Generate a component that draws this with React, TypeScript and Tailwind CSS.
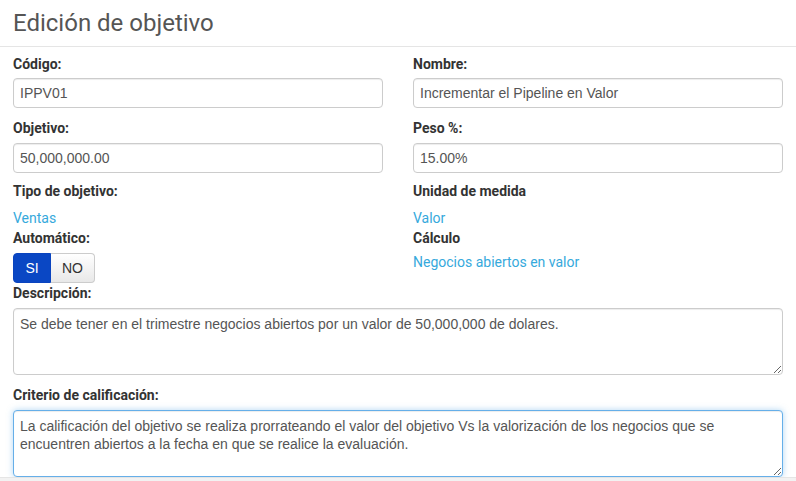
import React from "react";

const labelCls =
  "block font-['Roboto',sans-serif] font-bold text-[14px] leading-[20px] text-[#333333]";
const inputCls =
  "block w-full h-[30px] rounded-[4px] border border-[#cccccc] bg-white px-[6px] font-['Liberation_Sans',Arial,sans-serif] text-[14px] text-[#555555] outline-none shadow-[inset_0_1px_1px_rgba(0,0,0,0.075)]";
const linkCls =
  "block font-['Roboto',sans-serif] text-[14px] leading-[20px] text-[#36a9dc]";

export default function App() {
  return (
    <div className="w-[796px] h-[481px] overflow-hidden bg-white flex flex-col">
      <div className="h-[47px] shrink-0 border-b border-[#e5e5e5] pl-[13px] pt-[9px]">
        <h1 className="font-['Roboto',sans-serif] text-[24px] leading-[28px] text-[#555555] font-normal">
          Edición de objetivo
        </h1>
      </div>

      <div className="flex-1 px-[13px]">
        <div className="grid grid-cols-2 gap-x-[30px]">
          <div className="pt-[7px]">
            <label className={labelCls}>Código:</label>
            <input className={`${inputCls} mt-[4px]`} value="IPPV01" readOnly />
          </div>
          <div className="pt-[7px]">
            <label className={labelCls}>Nombre:</label>
            <input
              className={`${inputCls} mt-[4px]`}
              value="Incrementar el Pipeline en Valor"
              readOnly
            />
          </div>

          <div className="pt-[10px]">
            <label className={labelCls}>Objetivo:</label>
            <input className={`${inputCls} mt-[5px]`} value="50,000,000.00" readOnly />
          </div>
          <div className="pt-[10px]">
            <label className={labelCls}>Peso %:</label>
            <input className={`${inputCls} mt-[5px]`} value="15.00%" readOnly />
          </div>

          <div className="pt-[8px]">
            <span className={labelCls}>Tipo de objetivo:</span>
            <a className={`${linkCls} mt-[7px]`}>Ventas</a>
            <span className={labelCls}>Automático:</span>
            <div className="mt-[5px] flex h-[30px] w-[82px] font-['Liberation_Sans',Arial,sans-serif] text-[14px]">
              <div className="flex w-[38px] items-center justify-center rounded-l-[4px] border border-[#0a44bf] bg-[#0a47c4] text-white">
                SI
              </div>
              <div className="flex w-[44px] items-center justify-center rounded-r-[4px] border border-l-0 border-[#cccccc] bg-gradient-to-b from-white to-[#e8e8e8] text-[#333333]">
                NO
              </div>
            </div>
          </div>
          <div className="pt-[8px]">
            <span className={labelCls}>Unidad de medida</span>
            <a className={`${linkCls} mt-[7px]`}>Valor</a>
            <span className={labelCls}>Cálculo</span>
            <a className={`${linkCls} mt-[4px]`}>Negocios abiertos en valor</a>
          </div>
        </div>

        <label className={labelCls}>Descripción:</label>
        <textarea
          className="mt-[5px] block h-[67px] w-full rounded-[4px] border border-[#cccccc] bg-white px-[6px] pt-[6px] font-['Liberation_Sans',Arial,sans-serif] text-[14px] leading-[18px] text-[#555555] outline-none shadow-[inset_0_1px_1px_rgba(0,0,0,0.075)]"
          value="Se debe tener en el trimestre negocios abiertos por un valor de 50,000,000 de dolares."
          readOnly
        />

        <label className={`${labelCls} mt-[10px]`}>Criterio de calificación:</label>
        <textarea
          className="mt-[5px] block h-[67px] w-full rounded-[4px] border border-[#66afe9] bg-white px-[6px] pt-[6px] font-['Liberation_Sans',Arial,sans-serif] text-[14px] leading-[18px] text-[#555555] outline-none shadow-[inset_0_1px_1px_rgba(0,0,0,0.075),0_0_6px_rgba(102,175,233,0.5)]"
          value="La calificación del objetivo se realiza prorrateando el valor del objetivo Vs la valorización de los negocios que se encuentren abiertos a la fecha en que se realice la evaluación."
          readOnly
        />
      </div>

      <div className="h-[4px] shrink-0 border-t border-[#e5e5e5] bg-[#f2f2f2]" />
    </div>
  );
}
